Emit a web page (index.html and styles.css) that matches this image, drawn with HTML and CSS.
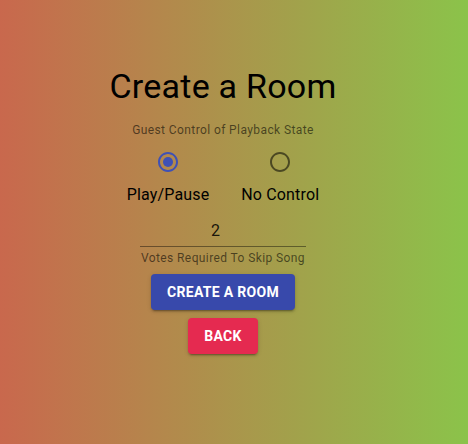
FILE: index.html
```html
<!DOCTYPE html>
<html lang="en">
<head>
<meta charset="utf-8">
<title>Create a Room</title>
<link rel="stylesheet" href="styles.css">
</head>
<body>
<main class="page">
  <div class="item">
    <h1 class="title">Create a Room</h1>
  </div>
  <div class="item">
    <div class="control">
      <p class="help help-top">Guest Control of Playback State</p>
      <div class="radios">
        <label class="opt">
          <span class="radio checked">
            <svg viewBox="0 0 24 24" width="24" height="24"><path d="M12 2C6.48 2 2 6.48 2 12s4.48 10 10 10 10-4.48 10-10S17.52 2 12 2zm0 18c-4.42 0-8-3.580-8-8s3.58-8 8-8 8 3.58 8 8-3.58 8-8 8z" fill="currentColor"/><circle cx="12" cy="12" r="5" fill="currentColor"/></svg>
          </span>
          <span class="opt-label">Play/Pause</span>
        </label>
        <label class="opt">
          <span class="radio">
            <svg viewBox="0 0 24 24" width="24" height="24"><path d="M12 2C6.48 2 2 6.48 2 12s4.48 10 10 10 10-4.48 10-10S17.52 2 12 2zm0 18c-4.42 0-8-3.58-8-8s3.58-8 8-8 8 3.58 8 8-3.58 8-8 8z" fill="currentColor"/></svg>
          </span>
          <span class="opt-label">No Control</span>
        </label>
      </div>
    </div>
  </div>
  <div class="item">
    <div class="field">
      <div class="input-root">
        <input class="input" type="text" value="2" readonly>
      </div>
      <p class="help help-bottom">Votes Required To Skip Song</p>
    </div>
  </div>
  <div class="item">
    <button class="btn btn-primary" type="button">Create a Room</button>
  </div>
  <div class="item">
    <button class="btn btn-secondary" type="button">Back</button>
  </div>
</main>
</body>
</html>
```

FILE: styles.css
```css
html, body {
  margin: 0;
  height: 100%;
}

body {
  background: linear-gradient(90deg, #c9684d 0%, #8bc34a 100%);
  font-family: Roboto, "Noto Sans", "Liberation Sans", sans-serif;
  color: rgba(0, 0, 0, 0.87);
}

.page {
  display: flex;
  flex-direction: column;
  align-items: center;
  padding: 61px 22px 0 0;
}

.item {
  padding: 4px;
  display: flex;
  justify-content: center;
}

.title {
  margin: 0;
  font-size: 34px;
  font-weight: 400;
  line-height: 42px;
  letter-spacing: 0.25px;
  color: #000;
}

.control {
  display: flex;
  flex-direction: column;
  align-items: center;
}

.help {
  margin: 0;
  font-size: 12px;
  letter-spacing: 0.4px;
  color: rgba(0, 0, 0, 0.58);
  text-align: center;
}

.help-top {
  margin-top: 5px;
  line-height: 20px;
}

.radios {
  display: flex;
  justify-content: center;
  margin-top: 1px;
}

.opt {
  display: flex;
  flex-direction: column;
  align-items: center;
  margin: 0 16px;
  cursor: pointer;
}

.radio {
  display: flex;
  padding: 9px;
  color: rgba(0, 0, 0, 0.54);
}

.radio.checked {
  color: #3f51b5;
}

.opt-label {
  font-size: 16px;
  line-height: 24px;
  letter-spacing: 0.15px;
  color: #000;
}

.field {
  display: flex;
  flex-direction: column;
  width: 166px;
}

.input-root {
  border-bottom: 1px solid rgba(0, 0, 0, 0.42);
  height: 31px;
}

.input {
  display: block;
  box-sizing: content-box;
  width: 151px;
  height: 19px;
  padding: 6px 15px 6px 0;
  margin: 0;
  border: 0;
  background: transparent;
  font-family: Roboto, "Noto Sans", "Liberation Sans", sans-serif;
  font-size: 16px;
  color: rgba(0, 0, 0, 0.87);
  text-align: center;
  outline: none;
}

.help-bottom {
  margin-top: 3px;
  line-height: 16px;
}

.btn {
  border: 0;
  border-radius: 4px;
  padding: 6px 16px;
  font-family: Roboto, "Noto Sans", "Liberation Sans", sans-serif;
  font-size: 14px;
  font-weight: 700;
  line-height: 24px;
  letter-spacing: 0.3px;
  text-transform: uppercase;
  color: #fff;
  cursor: pointer;
  box-shadow: 0 3px 1px -2px rgba(0, 0, 0, 0.2), 0 2px 2px 0 rgba(0, 0, 0, 0.14), 0 1px 5px 0 rgba(0, 0, 0, 0.12);
}

.btn-primary {
  background: #3849ab;
}

.btn-secondary {
  background: #e52a50;
}
```
